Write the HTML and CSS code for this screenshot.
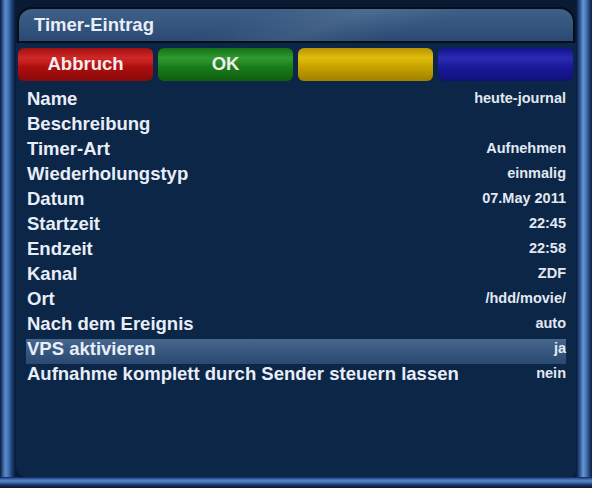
FILE: index.html
```html
<!DOCTYPE html>
<html>
<head>
<meta charset="utf-8">
<link rel="stylesheet" href="styles.css">
</head>
<body>
<div class="screen">
  <div class="tube tube-l"></div>
  <div class="main">
    <div class="title">Timer-Eintrag</div>
    <div class="content">
      <div class="buttons">
        <div class="btn red">Abbruch</div>
        <div class="btn green">OK</div>
        <div class="btn yellow"></div>
        <div class="btn blue"></div>
      </div>
      <div class="list">
        <div class="row"><span class="label">Name</span><span class="value">heute-journal</span></div>
        <div class="row"><span class="label">Beschreibung</span><span class="value"></span></div>
        <div class="row"><span class="label">Timer-Art</span><span class="value">Aufnehmen</span></div>
        <div class="row"><span class="label">Wiederholungstyp</span><span class="value">einmalig</span></div>
        <div class="row"><span class="label">Datum</span><span class="value">07.May 2011</span></div>
        <div class="row"><span class="label">Startzeit</span><span class="value">22:45</span></div>
        <div class="row"><span class="label">Endzeit</span><span class="value">22:58</span></div>
        <div class="row"><span class="label">Kanal</span><span class="value">ZDF</span></div>
        <div class="row"><span class="label">Ort</span><span class="value">/hdd/movie/</span></div>
        <div class="row"><span class="label">Nach dem Ereignis</span><span class="value">auto</span></div>
        <div class="row selected"><span class="label">VPS aktivieren</span><span class="value">ja</span></div>
        <div class="row"><span class="label">Aufnahme komplett durch Sender steuern lassen</span><span class="value">nein</span></div>
      </div>
    </div>
  </div>
  <div class="tube tube-r"></div>
  <div class="tube-b"></div>
</div>
</body>
</html>
```
FILE: styles.css
```css
html, body {
  margin: 0;
  padding: 0;
  background: #081428;
}
.screen {
  width: 592px;
  height: 488px;
  display: grid;
  grid-template-columns: 16px 1fr 16px;
  grid-template-rows: 1fr 11px;
  background: #0a1a34;
  font-family: "Liberation Sans", Arial, sans-serif;
  font-weight: bold;
  overflow: hidden;
}
.tube-l {
  grid-column: 1;
  grid-row: 1;
  background: linear-gradient(to right, #0a1a36 0px, #25467c 2px, #5a88c8 5px, #4a78b8 8px, #244a86 11px, #12284e 14px, #081830 16px);
}
.tube-r {
  grid-column: 3;
  grid-row: 1;
  background: linear-gradient(to right, #081830 0px, #1a3464 2px, #3c68a8 5px, #6a96d0 7px, #4a78b8 10px, #24467e 13px, #0e2040 16px);
}
.tube-b {
  grid-column: 1 / 4;
  grid-row: 2;
  background: linear-gradient(to bottom, #0e2450 0px, #3a64a8 2px, #5a88c8 4px, #3a64a4 6px, #1a3464 8px, #0a1830 11px);
  border-radius: 0 0 4px 4px;
}
.main {
  grid-column: 2;
  grid-row: 1;
  display: flex;
  flex-direction: column;
  padding-top: 7px;
  background: #0a1a32;
}
.title {
  height: 32px;
  margin: 0 1px;
  border: 2px solid #060e1c;
  border-radius: 15px 15px 0 0;
  background:
    linear-gradient(160deg, rgba(255,255,255,0) 40%, rgba(255,255,255,0.08) 55%, rgba(255,255,255,0) 70%),
    linear-gradient(to bottom, #3e6088 0%, #34557e 50%, #2a4a72 100%);
  color: #e8eef8;
  font-size: 18.5px;
  line-height: 31px;
  padding-left: 15px;
  box-sizing: content-box;
}
.content {
  flex: 1;
  background: #0c2648;
  border-radius: 0 0 6px 10px;
  padding-top: 5px;
}
.buttons {
  display: grid;
  grid-template-columns: repeat(4, 1fr);
  gap: 5px;
  padding: 0 3px 0 2px;
  height: 33px;
}
.btn {
  border-radius: 6px;
  text-align: center;
  line-height: 32px;
  font-size: 18.5px;
  color: #f2ecec;
}
.red {
  background: linear-gradient(to bottom, #a01010 0%, #d02828 30%, #c41c1c 45%, #b01010 55%, #8a0808 100%);
}
.green {
  background: linear-gradient(to bottom, #146e14 0%, #2e9a2e 30%, #248c24 45%, #1a7e1a 55%, #0e5e0e 100%);
}
.yellow {
  background: linear-gradient(to bottom, #b89400 0%, #e0bc10 30%, #d4b000 45%, #c8a400 55%, #a08000 100%);
}
.blue {
  background: linear-gradient(to bottom, #12128a 0%, #2a2ab4 30%, #2222a8 45%, #1a1a9c 55%, #10107a 100%);
}
.list {
  margin: 8px 10px 0 10px;
  display: flex;
  flex-direction: column;
}
.row {
  height: 25px;
  display: flex;
  justify-content: space-between;
  align-items: flex-start;
}
.label {
  font-size: 18.5px;
  line-height: 19px;
  color: #e8eef8;
  padding-left: 1px;
  white-space: nowrap;
}
.value {
  font-size: 14.5px;
  line-height: 19px;
  color: #e2e8f0;
  white-space: nowrap;
}
.selected {
  background: linear-gradient(to bottom, #46668e 0%, #3a5a82 40%, #2a4870 100%);
}
```
